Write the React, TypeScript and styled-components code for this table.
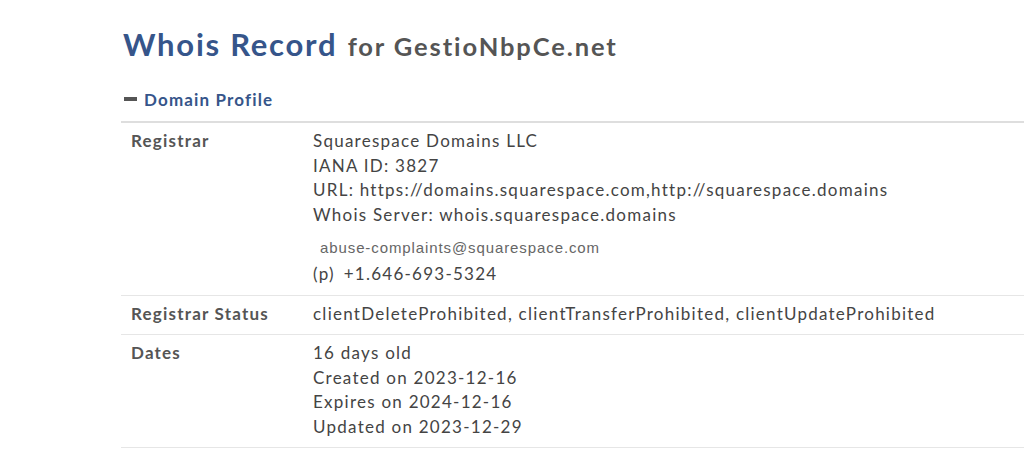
import React from "react";
import styled, { createGlobalStyle } from "styled-components";

const Global = createGlobalStyle`
  html, body { margin: 0; padding: 0; background: #fff; }
  body { font-family: Lato, "Open Sans", sans-serif; }
`;

const Page = styled.div`
  padding: 22px 0 0 121px;
  overflow: hidden;
`;

const Title = styled.h1`
  margin: 0 0 0 2px;
  font-size: 31px;
  font-weight: 700;
  color: #36558a;
  line-height: 44px;
  letter-spacing: 1.75px;
  white-space: nowrap;
`;

const Sub = styled.span`
  font-size: 25.5px;
  color: #555;
  letter-spacing: 1.9px;
  margin-left: 1px;
`;

const SectionHead = styled.div`
  display: flex;
  align-items: center;
  margin-top: 19px;
  margin-left: 3px;
  gap: 7px;
  font-size: 17px;
  font-weight: 700;
  color: #36558a;
  letter-spacing: 1.15px;
  height: 24px;
`;

const Dash = styled.span`
  display: inline-block;
  width: 13px;
  height: 4px;
  background: #555;
`;

const Table = styled.div`
  margin-top: 10px;
  border-top: 2px solid #dedede;
  width: 1100px;
`;

const Row = styled.div`
  display: grid;
  grid-template-columns: 182px 1fr;
  padding: 6px 0 8px 10px;
  border-bottom: 1px solid #e6e6e6;
`;

const Label = styled.div`
  font-size: 17px;
  font-weight: 700;
  color: #555;
  line-height: 24.5px;
  letter-spacing: 1.2px;
`;

const Values = styled.div`
  font-size: 17px;
  color: #444;
  line-height: 24.5px;
  letter-spacing: 1.25px;
`;

const Line = styled.div`
  white-space: nowrap;
`;

const Phone = styled.span`
  margin-left: 9px;
`;

const Email = styled.div`
  font-family: "Liberation Sans", Arial, sans-serif;
  font-size: 15px;
  color: #666;
  padding-left: 7px;
  margin-top: 6px;
  line-height: 29px;
  letter-spacing: 0.9px;
  white-space: nowrap;
`;

export default function App() {
  return (
    <>
      <Global />
      <Page>
        <Title>
          Whois Record <Sub>for GestioNbpCe.net</Sub>
        </Title>
        <SectionHead>
          <Dash />
          Domain Profile
        </SectionHead>
        <Table>
          <Row>
            <Label>Registrar</Label>
            <Values>
              <Line>Squarespace Domains LLC</Line>
              <Line>IANA ID: 3827</Line>
              <Line>URL: https://domains.squarespace.com,http://squarespace.domains</Line>
              <Line>Whois Server: whois.squarespace.domains</Line>
              <Email>abuse-complaints@squarespace.com</Email>
              <Line>
                (p)<Phone>+1.646-693-5324</Phone>
              </Line>
            </Values>
          </Row>
          <Row>
            <Label>Registrar Status</Label>
            <Values>
              <Line>clientDeleteProhibited, clientTransferProhibited, clientUpdateProhibited</Line>
            </Values>
          </Row>
          <Row>
            <Label>Dates</Label>
            <Values>
              <Line>16 days old</Line>
              <Line>Created on 2023-12-16</Line>
              <Line>Expires on 2024-12-16</Line>
              <Line>Updated on 2023-12-29</Line>
            </Values>
          </Row>
        </Table>
      </Page>
    </>
  );
}
